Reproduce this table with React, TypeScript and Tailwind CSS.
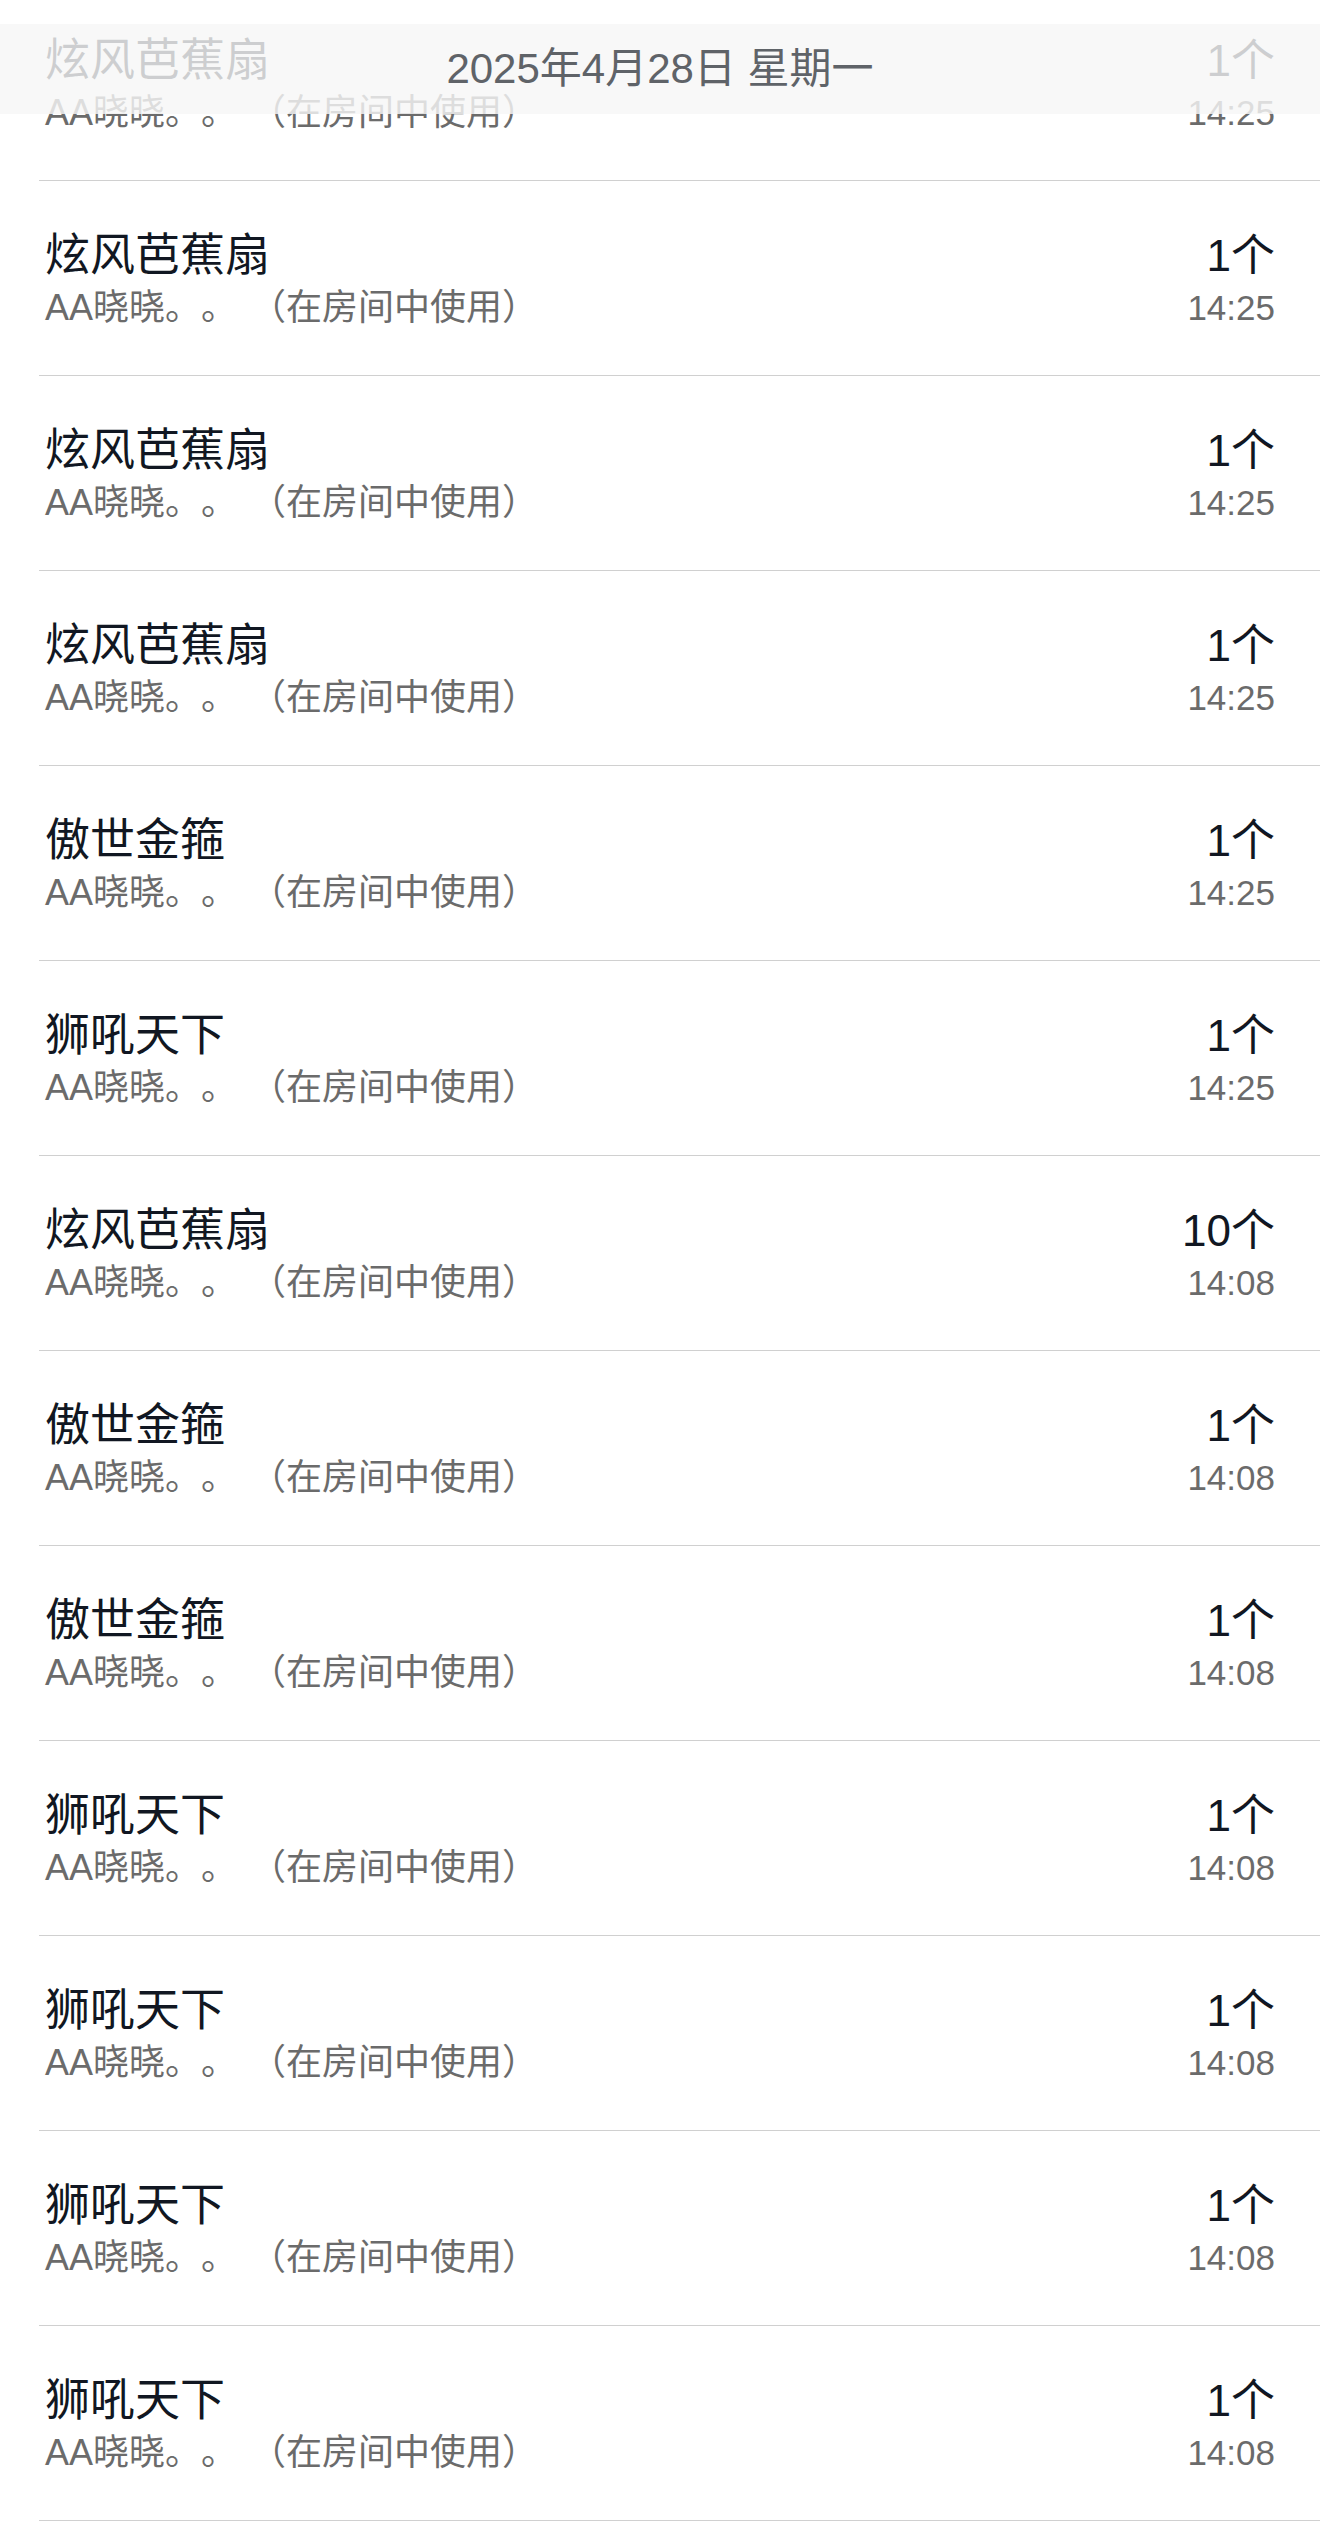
import React from "react";

type Item = { name: string; count: string; time: string };

const items: Item[] = [
  { name: "炫风芭蕉扇", count: "1个", time: "14:25" },
  { name: "炫风芭蕉扇", count: "1个", time: "14:25" },
  { name: "炫风芭蕉扇", count: "1个", time: "14:25" },
  { name: "炫风芭蕉扇", count: "1个", time: "14:25" },
  { name: "傲世金箍", count: "1个", time: "14:25" },
  { name: "狮吼天下", count: "1个", time: "14:25" },
  { name: "炫风芭蕉扇", count: "10个", time: "14:08" },
  { name: "傲世金箍", count: "1个", time: "14:08" },
  { name: "傲世金箍", count: "1个", time: "14:08" },
  { name: "狮吼天下", count: "1个", time: "14:08" },
  { name: "狮吼天下", count: "1个", time: "14:08" },
  { name: "狮吼天下", count: "1个", time: "14:08" },
  { name: "狮吼天下", count: "1个", time: "14:08" },
];

const font = { fontFamily: '"Liberation Sans", "Noto Sans CJK SC", sans-serif' };

function Row({ item }: { item: Item }) {
  return (
    <div className="h-[195px] border-b border-[#d0d0d0] flex justify-between pl-[6px] pr-[45px] pt-[52px]">
      <div className="flex flex-col">
        <div className="text-[45px] leading-[45px] text-[#111722]">{item.name}</div>
        <div className="text-[36px] leading-[50px] mt-[5px] text-[#6b6b6b] whitespace-pre">
          AA晓晓。。<span className="inline-block w-[13px]"></span>（在房间中使用）
        </div>
      </div>
      <div className="flex flex-col items-end">
        <div className="text-[44px] leading-[45px] text-[#111722]">{item.count}</div>
        <div className="text-[35px] leading-[50px] mt-[5px] text-[#6b6b6b]">{item.time}</div>
      </div>
    </div>
  );
}

export default function App() {
  return (
    <div className="relative w-[1320px] h-[2527px] overflow-hidden bg-white [text-spacing-trim:space-all]" style={font}>
      <div className="ml-[39px] -mt-[14px]">
        {items.map((it, i) => (
          <Row key={i} item={it} />
        ))}
      </div>
      <div className="absolute left-0 right-0 top-[24px] h-[90px] bg-[rgba(246,246,246,0.82)] flex items-center justify-center">
        <span className="text-[42px] leading-none text-[#5f6368]">2025年4月28日 星期一</span>
      </div>
    </div>
  );
}
